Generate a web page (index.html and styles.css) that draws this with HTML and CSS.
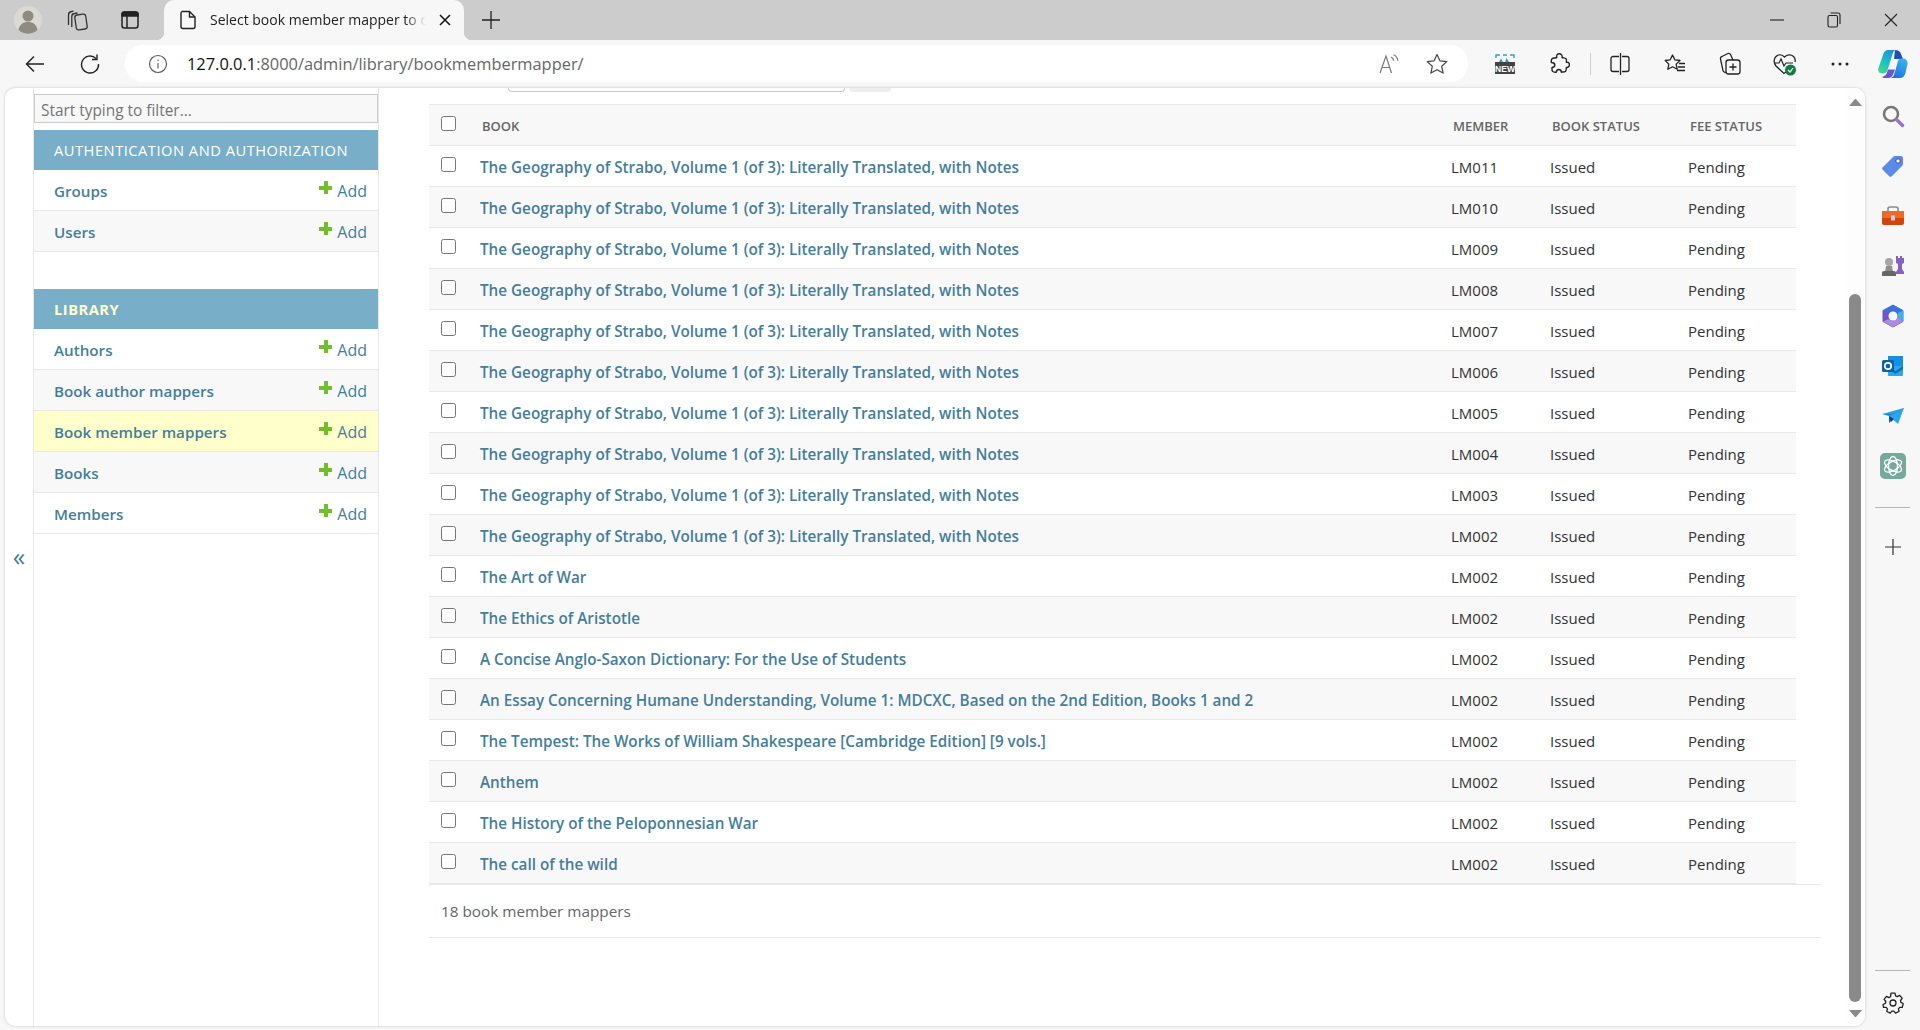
FILE: index.html
```html
<!DOCTYPE html>
<html lang="en">

<head>
    <meta charset="UTF-8">
    <title>Select book member mapper to change</title>
    <link rel="stylesheet" href="styles.css">
</head>

<body>
    <!-- tab strip -->
    <div class="tabstrip">
        <div class="strip-btn profile-btn">
            <svg width="30" height="30" viewBox="0 0 30 30"><circle cx="15" cy="15" r="14" fill="#dbd9d4"/><circle cx="15" cy="11" r="5.5" fill="#8e8b85"/><path d="M5.5 25c.8-5.500 4.500-8 9.500-8s8.700 2.500 9.500 8a14 14 0 0 1-19 0z" fill="#8e8b85"/></svg>
        </div>
        <div class="strip-btn workspaces-btn">
            <svg width="24" height="24" viewBox="0 0 24 24" fill="none" stroke="#333" stroke-width="1.3"><path d="M3.5 17V7a3.500 3.500 0 0 1 3-3.500l2-.4"/><path d="M6.800 19V8.500a3 3 0 0 1 2.700-3l3-.5"/><rect x="10.500" y="6.500" width="11" height="15" rx="2.500" transform="rotate(-8 16 14)"/></svg>
        </div>
        <div class="strip-btn layout-btn">
            <svg width="20" height="20" viewBox="0 0 20 20" fill="none" stroke="#222" stroke-width="1.5"><rect x="2" y="2" width="16" height="16" rx="2.5"/><path d="M2 4.500A2.500 2.500 0 0 1 4.500 2h11A2.500 2.500 0 0 1 18 4.500V6H2z" fill="#222"/><path d="M7 6v12"/></svg>
        </div>
        <div class="tab">
            <svg class="tab-icon" width="18" height="20" viewBox="0 0 18 20" fill="none" stroke="#222" stroke-width="1.4"><path d="M3 1.500h7.500L16 7v9.500a2 2 0 0 1-2 2H4a2 2 0 0 1-2-2v-13a2 2 0 0 1 1-2z"/><path d="M10.500 1.500V7H16"/></svg>
            <span class="tab-title">Select book member mapper to change</span>
            <svg class="tab-close" width="12" height="12" viewBox="0 0 12 12" stroke="#111" stroke-width="1.5"><path d="M1 1l10 10M11 1L1 11"/></svg>
        </div>
        <div class="new-tab">
            <svg width="18" height="18" viewBox="0 0 18 18" stroke="#222" stroke-width="1.3"><path d="M9 0v18M0 9h18"/></svg>
        </div>
        <div class="window-btns">
            <div class="window-btn"><svg width="14" height="14" viewBox="0 0 14 14" stroke="#222" stroke-width="1.1"><path d="M0 7h14"/></svg></div>
            <div class="window-btn"><svg width="14" height="16" viewBox="0 0 14 16" fill="none" stroke="#222" stroke-width="1.1"><rect x="1" y="3.500" width="9.500" height="11.500" rx="1.500"/><path d="M3.500 1H11a2 2 0 0 1 2 2v9"/></svg></div>
            <div class="window-btn"><svg width="14" height="14" viewBox="0 0 14 14" stroke="#222" stroke-width="1.1"><path d="M1 1l12 12M13 1L1 13"/></svg></div>
        </div>
    </div>

    <!-- address bar row -->
    <div class="toolbar">
        <div class="tool">
            <svg width="20" height="18" viewBox="0 0 20 18" fill="none" stroke="#222" stroke-width="1.4"><path d="M19 9H1.500M9 1.500L1.500 9 9 16.500"/></svg>
        </div>
        <div class="tool">
            <svg width="20" height="20" viewBox="0 0 20 20" fill="none" stroke="#222" stroke-width="1.4"><path d="M16 4.500A8.500 8.500 0 1 0 18.500 10"/><path d="M17 0.500v5h-5"/></svg>
        </div>
        <div class="address">
            <svg class="info-icon" width="20" height="20" viewBox="0 0 20 20" fill="none" stroke="#555" stroke-width="1.1"><circle cx="10" cy="10" r="8.500"/><path d="M10 9v5.500M10 5.500V7"/></svg>
            <span class="url"><span class="url-host">127.0.0.1</span>:8000/admin/library/bookmembermapper/</span>
            <svg class="read-icon" width="20" height="20" viewBox="0 0 20 20" fill="none" stroke="#777" stroke-width="1.2"><path d="M1 19L7 2l5.500 17M3 13.500h8"/><path d="M12 3c1.500.6 2.500 2 2.700 3.800M14.500 .8c2.500 1 4 3 4.300 6"/></svg>
            <svg class="star-icon" width="24" height="24" viewBox="0 0 24 24" fill="none" stroke="#444" stroke-width="1.2" stroke-linejoin="round"><path d="M12 2.500l2.900 6.300 6.900.8-5.100 4.700 1.400 6.800-6.100-3.400-6.100 3.400 1.400-6.800-5.100-4.700 6.900-.8z"/></svg>
        </div>
        <div class="tool tool-first">
            <svg width="20" height="20" viewBox="0 0 20 20"><path d="M1 4V1h4M8 1h4M15 1h4v3" stroke="#2aa5b5" stroke-width="1.4" fill="none"/><path d="M4 8l2-3.500L8 8zM10 8l1.500-4L14 8z" fill="#2aa5b5"/><rect y="8" width="20" height="12" fill="#444"/><text class="new-label" x="10" y="17.500">NEW</text></svg>
        </div>
        <div class="tool">
            <svg width="20" height="22" viewBox="0 0 20 22" fill="none" stroke="#222" stroke-width="1.4" stroke-linejoin="round"><path d="M6.800 4.500C6 2.300 7.500 .8 9.300 .8s3.300 1.500 2.700 3.700c1.500 .6 3 .3 4 1.300 .8 .9 .3 2.500 .4 3.500 2-.4 3 1 3 2.500s-1 3-3 2.600c-.2 1.300 .2 2.800-.8 3.800-1.200 1.100-3 .6-4.200 1-.2-1.600-1.200-2.700-2.600-2.700s-2.300 1.100-2.500 2.700c-1.300 0-2.800 .2-3.700-.8-.9-1-.6-2.700-.6-4 1.600-.1 2.800-1.100 2.800-2.500S3 9.500 1.300 9.500c0-1.300-.2-2.800 .7-3.700 1.200-1.100 3.300-.6 4.800-1.300z"/></svg>
        </div>
        <div class="tool-sep"></div>
        <div class="tool">
            <svg width="20" height="22" viewBox="0 0 20 22" fill="none" stroke="#222" stroke-width="1.3"><path d="M9 3.500H3a2 2 0 0 0-2 2v11a2 2 0 0 0 2 2h6M12 3.500h5a2 2 0 0 1 2 2v11a2 2 0 0 1-2 2h-5M10.500 0v22"/></svg>
        </div>
        <div class="tool">
            <svg width="22" height="22" viewBox="0 0 22 22" fill="none" stroke="#222" stroke-width="1.3" stroke-linejoin="round"><path d="M8.500 2l2.300 4.800 5.200.7-3.800 3.600 1 5.200-4.700-2.500-4.700 2.500 1-5.200L1.200 7.500l5-.7zM15 10.500h6M14 14h7M13 17.500h8"/></svg>
        </div>
        <div class="tool">
            <svg width="22" height="24" viewBox="0 0 22 24" fill="none" stroke="#222" stroke-width="1.3"><rect x="7" y="8" width="14" height="14" rx="2.5"/><path d="M14 11.500v7M10.500 15h7"/><path d="M7 20.500l-1.500-.3A2 2 0 0 1 4 18.700L1.500 7A2 2 0 0 1 3 4.500l6-3a2 2 0 0 1 2.500 1L14 8"/></svg>
        </div>
        <div class="tool">
            <svg width="24" height="24" viewBox="0 0 24 24" fill="none"><path d="M13 20l-2 1.500L3 14C.5 11 .5 7 3 4.500s6-2 8.500.5c2.500-2.500 6.500-3 9-.5 1.500 1.500 2 3.500 1.500 5.500" stroke="#222" stroke-width="1.3"/><path d="M1 11h5l2-4 3 7 2-3h7" stroke="#222" stroke-width="1.2"/><circle cx="17.500" cy="18" r="5.500" fill="#107c41"/><path d="M15 18l2 2 3-4" stroke="#fff" stroke-width="1.2"/></svg>
        </div>
        <div class="tool">
            <svg width="18" height="4" viewBox="0 0 18 4" fill="#222"><circle cx="2" cy="2" r="1.5"/><circle cx="9" cy="2" r="1.5"/><circle cx="16" cy="2" r="1.5"/></svg>
        </div>
        <div class="tool tool-copilot">
            <svg width="30" height="28" viewBox="0 0 30 28">
                <defs>
                    <linearGradient id="cpLeft" x1="0.7" y1="0" x2="0.2" y2="1"><stop offset="0" stop-color="#1f8fe0"/><stop offset="0.55" stop-color="#1ec3c0"/><stop offset="1" stop-color="#46d98a"/></linearGradient>
                    <linearGradient id="cpRight" x1="0.8" y1="0" x2="0.2" y2="1"><stop offset="0" stop-color="#38b4f0"/><stop offset="1" stop-color="#1d6fe0"/></linearGradient>
                </defs>
                <path d="M17 0c3 0 5 1 6 4l2 5H16z" fill="#1f4fb8"/>
                <path d="M10 0h8c-1.500 0-2.500 1-3 2.500L9.500 20c-.6 2-2.500 3.500-4.500 3.500H3.500C1 23.500-.5 21 .3 18.500L5.500 3.500C6.300 1.300 8 0 10 0z" fill="url(#cpLeft)"/>
                <path d="M6 28c-1.500 0-2-1-1-1.500 2-.5 3.500-2 4-4l1-3h7l-2 5c-.8 2-2.500 3.500-4.500 3.500z" fill="#6a55d8"/>
                <path d="M12 28c2 0 3.500-1.500 4.200-3.500L20 11c.5-1.500 1.500-2.500 3-2.500h2c3 0 5 2.500 4.500 5.500l-2 9c-.7 3-3 5-5.500 5z" fill="url(#cpRight)"/>
            </svg>
        </div>
    </div>

    <div class="window">
        <div class="page">
            <div class="nav-toggle">«</div>

            <div class="nav">
                <input class="nav-filter" type="text" placeholder="Start typing to filter...">

                <div class="app-caption">Authentication and Authorization</div>
                <div class="model-row"><a class="model-name">Groups</a><a class="addlink">Add</a></div>
                <div class="model-row alt"><a class="model-name">Users</a><a class="addlink">Add</a></div>

                <div class="app-caption current">Library</div>
                <div class="model-row"><a class="model-name">Authors</a><a class="addlink">Add</a></div>
                <div class="model-row alt"><a class="model-name">Book author mappers</a><a class="addlink">Add</a></div>
                <div class="model-row selected"><a class="model-name">Book member mappers</a><a class="addlink">Add</a></div>
                <div class="model-row alt"><a class="model-name">Books</a><a class="addlink">Add</a></div>
                <div class="model-row"><a class="model-name">Members</a><a class="addlink">Add</a></div>
            </div>

            <div class="content">
                <div class="search-bar">
                    <div class="search-input"></div>
                    <div class="search-btn"></div>
                </div>

                <table class="result-list">
                    <thead>
                        <tr>
                            <th class="col-check"><input type="checkbox"></th>
                            <th class="col-book">Book</th>
                            <th class="col-member">Member</th>
                            <th class="col-status">Book status</th>
                            <th class="col-fee">Fee status</th>
                        </tr>
                    </thead>
                    <tbody>
                        <tr><td><input type="checkbox"></td><td><a>The Geography of Strabo, Volume 1 (of 3): Literally Translated, with Notes</a></td><td>LM011</td><td>Issued</td><td>Pending</td></tr>
                        <tr><td><input type="checkbox"></td><td><a>The Geography of Strabo, Volume 1 (of 3): Literally Translated, with Notes</a></td><td>LM010</td><td>Issued</td><td>Pending</td></tr>
                        <tr><td><input type="checkbox"></td><td><a>The Geography of Strabo, Volume 1 (of 3): Literally Translated, with Notes</a></td><td>LM009</td><td>Issued</td><td>Pending</td></tr>
                        <tr><td><input type="checkbox"></td><td><a>The Geography of Strabo, Volume 1 (of 3): Literally Translated, with Notes</a></td><td>LM008</td><td>Issued</td><td>Pending</td></tr>
                        <tr><td><input type="checkbox"></td><td><a>The Geography of Strabo, Volume 1 (of 3): Literally Translated, with Notes</a></td><td>LM007</td><td>Issued</td><td>Pending</td></tr>
                        <tr><td><input type="checkbox"></td><td><a>The Geography of Strabo, Volume 1 (of 3): Literally Translated, with Notes</a></td><td>LM006</td><td>Issued</td><td>Pending</td></tr>
                        <tr><td><input type="checkbox"></td><td><a>The Geography of Strabo, Volume 1 (of 3): Literally Translated, with Notes</a></td><td>LM005</td><td>Issued</td><td>Pending</td></tr>
                        <tr><td><input type="checkbox"></td><td><a>The Geography of Strabo, Volume 1 (of 3): Literally Translated, with Notes</a></td><td>LM004</td><td>Issued</td><td>Pending</td></tr>
                        <tr><td><input type="checkbox"></td><td><a>The Geography of Strabo, Volume 1 (of 3): Literally Translated, with Notes</a></td><td>LM003</td><td>Issued</td><td>Pending</td></tr>
                        <tr><td><input type="checkbox"></td><td><a>The Geography of Strabo, Volume 1 (of 3): Literally Translated, with Notes</a></td><td>LM002</td><td>Issued</td><td>Pending</td></tr>
                        <tr><td><input type="checkbox"></td><td><a>The Art of War</a></td><td>LM002</td><td>Issued</td><td>Pending</td></tr>
                        <tr><td><input type="checkbox"></td><td><a>The Ethics of Aristotle</a></td><td>LM002</td><td>Issued</td><td>Pending</td></tr>
                        <tr><td><input type="checkbox"></td><td><a>A Concise Anglo-Saxon Dictionary: For the Use of Students</a></td><td>LM002</td><td>Issued</td><td>Pending</td></tr>
                        <tr><td><input type="checkbox"></td><td><a>An Essay Concerning Humane Understanding, Volume 1: MDCXC, Based on the 2nd Edition, Books 1 and 2</a></td><td>LM002</td><td>Issued</td><td>Pending</td></tr>
                        <tr><td><input type="checkbox"></td><td><a>The Tempest: The Works of William Shakespeare [Cambridge Edition] [9 vols.]</a></td><td>LM002</td><td>Issued</td><td>Pending</td></tr>
                        <tr><td><input type="checkbox"></td><td><a>Anthem</a></td><td>LM002</td><td>Issued</td><td>Pending</td></tr>
                        <tr><td><input type="checkbox"></td><td><a>The History of the Peloponnesian War</a></td><td>LM002</td><td>Issued</td><td>Pending</td></tr>
                        <tr><td><input type="checkbox"></td><td><a>The call of the wild</a></td><td>LM002</td><td>Issued</td><td>Pending</td></tr>
                    </tbody>
                </table>

                <p class="paginator">18 book member mappers</p>
            </div>

            <div class="scrollbar">
                <div class="scroll-arrow up"></div>
                <div class="scroll-track"><div class="scroll-thumb"></div></div>
                <div class="scroll-arrow down"></div>
            </div>
        </div>

        <!-- edge sidebar -->
        <div class="rail">
            <div class="rail-btn"><svg width="24" height="24" viewBox="0 0 24 24" fill="none"><circle cx="10" cy="10" r="7" stroke="#777" stroke-width="2.6"/><path d="M15.500 15.500l6 6" stroke="#9b6fd0" stroke-width="3.4" stroke-linecap="round"/></svg></div>
            <div class="rail-btn"><svg width="22" height="22" viewBox="0 0 22 22"><path d="M13 1h6a2 2 0 0 1 2 2v6a3 3 0 0 1-1 2L10 21a2 2 0 0 1-3 0L1 15a2 2 0 0 1 0-3L11 2a3 3 0 0 1 2-1z" fill="#5b8be6"/><circle cx="16" cy="6" r="2.2" fill="#fff" stroke="#4b3fa8" stroke-width="1"/></svg></div>
            <div class="rail-btn"><svg width="24" height="20" viewBox="0 0 24 20"><path d="M7 6V3a2 2 0 0 1 2-2h6a2 2 0 0 1 2 2v3" fill="none" stroke="#8a8a8a" stroke-width="1.6"/><rect x="1" y="5" width="22" height="7" fill="#ef6a2a"/><path d="M1 12h22v5a2 2 0 0 1-2 2H3a2 2 0 0 1-2-2z" fill="#d2430f"/><rect x="10" y="9.500" width="4" height="5" fill="#ccc"/></svg></div>
            <div class="rail-btn"><svg width="24" height="24" viewBox="0 0 24 24"><path d="M15 2h2v2h2V2h2v2h2V2v7l-2 1v5l2 3v2h-8v-2l2-3v-5l-2-1z" fill="#8661c5"/><circle cx="8" cy="8" r="4" fill="#a6a6a6"/><path d="M5 12h6l1 6H4z" fill="#8f8f8f"/><path d="M1 19c0-2 2-2 3-2h8c1 0 3 0 3 2v3H1z" fill="#666"/></svg></div>
            <div class="rail-btn"><svg width="22" height="24" viewBox="0 0 22 24"><path d="M11 1l10 5.500v11L11 23 1 17.500v-11z" fill="#3f6fd8" stroke="#3f6fd8" stroke-width="1" stroke-linejoin="round"/><path d="M1 17.500L11 23l10-5.500L16 13l-5 4-5-2z" fill="#b38ae0"/><path d="M1 6.500L6 9v6l-5 2.500z" fill="#7b4fc9"/><path d="M16 9l5-2.500v11L16 13z" fill="#38b6e8"/><circle cx="11" cy="12" r="4.500" fill="#f7f7f7"/></svg></div>
            <div class="rail-btn"><svg width="22" height="22" viewBox="0 0 22 22"><rect x="6" y="1" width="15" height="10" fill="#1490df"/><path d="M6 11h15v9a1 1 0 0 1-1 1H7a1 1 0 0 1-1-1z" fill="#28a8ea"/><path d="M6 11l7.500 5 7.500-5v3l-7.500 5L6 14z" fill="#0f6cbd"/><rect y="5" width="12" height="12" rx="1.5" fill="#0a5fb4"/><circle cx="6" cy="11" r="3.200" fill="none" stroke="#fff" stroke-width="1.7"/></svg></div>
            <div class="rail-btn"><svg width="22" height="18" viewBox="0 0 22 18"><path d="M0 7L22 1 12 7z" fill="#2b9fe8"/><path d="M22 1L7 9v7z" fill="#1268c9"/><path d="M22 1l-6 16-9-8z" fill="#29a8f0"/><path d="M0 7l7 2 5-2z" fill="#1e88d8"/><path d="M7 9l2 6 3-3z" fill="#0c3f8f"/></svg></div>
            <div class="rail-btn"><svg width="26" height="26" viewBox="0 0 26 26" fill="none"><rect width="26" height="26" rx="5" fill="#75a99b"/><g stroke="#fff" stroke-width="1.3"><ellipse cx="13" cy="13" rx="4.500" ry="9.500"/><ellipse cx="13" cy="13" rx="4.500" ry="9.500" transform="rotate(60 13 13)"/><ellipse cx="13" cy="13" rx="4.500" ry="9.500" transform="rotate(120 13 13)"/></g></svg></div>
            <div class="rail-sep"></div>
            <div class="rail-btn"><svg width="16" height="16" viewBox="0 0 16 16" stroke="#333" stroke-width="1.2"><path d="M8 0v16M0 8h16"/></svg></div>
            <div class="rail-spacer"></div>
            <div class="rail-sep"></div>
            <div class="rail-gear"><svg width="22" height="22" viewBox="0 0 22 22" fill="none" stroke="#222" stroke-width="1.3" stroke-linejoin="round"><circle cx="11" cy="11" r="3"/><path d="M9 1.200h4l.6 2.600 1.700.8 2.400-1.200 2.500 3-1.700 2.100.4 1.900 2.300 1.100-.9 3.800-2.600.1-1.200 1.500.5 2.600-3.500 1.600-1.600-2h-2l-1.700 2-3.400-1.600.6-2.600-1.200-1.500-2.700-.1L1 12.500l2.400-1.100.4-1.900L2.100 7.400l2.400-3 2.500 1.200 1.500-.8z"/></svg></div>
        </div>
    </div>
</body>

</html>
```

FILE: styles.css
```css
* {
    box-sizing: border-box;
}

html,
body {
    height: 100%;
}

body {
    margin: 0;
    overflow: hidden;
    display: flex;
    flex-direction: column;
    font-family: "Open Sans", "Noto Sans", sans-serif;
    background-color: #f7f7f7;
    color: #333;
}

svg {
    display: block;
}

/* browser chrome */
.tabstrip {
    height: 40px;
    flex: none;
    display: flex;
    align-items: center;
    background-color: #cccccc;
}

.strip-btn {
    display: flex;
    align-items: center;
    justify-content: center;
    flex: none;
}

.profile-btn {
    width: 30px;
    margin-left: 13px;
}

.workspaces-btn {
    width: 24px;
    margin-left: 22px;
}

.layout-btn {
    width: 20px;
    margin-left: 31px;
}

.tab {
    position: relative;
    width: 300px;
    height: 40px;
    margin-left: 24px;
    padding-left: 15px;
    display: flex;
    align-items: center;
    background-color: #f7f7f7;
    border-radius: 10px 10px 0 0;
    flex: none;
}

/* the little curves where the tab meets the toolbar */
.tab::before,
.tab::after {
    content: "";
    position: absolute;
    bottom: 0;
    width: 8px;
    height: 8px;
}

.tab::before {
    left: -8px;
    background: radial-gradient(circle at 0 0, transparent 8px, #f7f7f7 8.5px);
}

.tab::after {
    right: -8px;
    background: radial-gradient(circle at 100% 0, transparent 8px, #f7f7f7 8.5px);
}

.tab-icon {
    flex: none;
}

.tab-title {
    margin-left: 13px;
    padding-bottom: 2px;
    width: 216px;
    font-size: 14px;
    white-space: nowrap;
    overflow: hidden;
    color: #222;
    -webkit-mask-image: linear-gradient(to right, #000 195px, transparent 216px);
    mask-image: linear-gradient(to right, #000 195px, transparent 216px);
}

.tab-close {
    margin-left: 13px;
    flex: none;
}

.new-tab {
    margin-left: 18px;
    flex: none;
}

.window-btns {
    margin-left: auto;
    padding-right: 1px;
    display: flex;
}

.window-btn {
    width: 57px;
    height: 40px;
    display: flex;
    align-items: center;
    justify-content: center;
}

.toolbar {
    height: 48px;
    flex: none;
    display: flex;
    align-items: flex-start;
    padding-left: 7px;
    background-color: #f7f7f7;
}

.tool {
    width: 55px;
    height: 37px;
    margin-top: 5px;
    display: flex;
    align-items: center;
    justify-content: center;
    flex: none;
}

.tool-first {
    margin-left: 9px;
}

.tool-sep {
    width: 1px;
    height: 22px;
    margin-top: 13px;
    margin-left: 3px;
    margin-right: 1px;
    background-color: #cfcfcf;
    flex: none;
}

.tool-copilot {
    width: 51px;
}

.address {
    width: 1343px;
    height: 37px;
    margin-top: 5px;
    margin-left: 8px;
    display: flex;
    align-items: center;
    background-color: #fff;
    border-radius: 18px;
    flex: none;
}

.info-icon {
    margin-left: 23px;
}

.url {
    margin-left: 19px;
    font-size: 16.4px;
    color: #666;
}

.url-host {
    color: #111;
}

.read-icon {
    margin-left: auto;
}

.star-icon {
    margin-left: 26px;
    margin-right: 19px;
}

.new-label {
    font-family: "Liberation Sans", sans-serif;
    font-size: 8.5px;
    font-weight: 700;
    fill: #fff;
    text-anchor: middle;
}

/* page */
.window {
    flex: 1;
    min-height: 0;
    display: flex;
}

.page {
    width: 1860px;
    height: 938px;
    margin-left: 5px;
    display: flex;
    overflow: hidden;
    background-color: #fff;
    border-radius: 10px;
    box-shadow: 0 0 3px rgba(0, 0, 0, 0.2);
    flex: none;
}

.nav-toggle {
    width: 29px;
    padding-top: 452px;
    border-right: 1px solid #e8e8e8;
    color: #447e9b;
    font-size: 25px;
    line-height: 32px;
    text-align: center;
    flex: none;
}

.nav {
    width: 345px;
    border-right: 1px solid #e8e8e8;
    flex: none;
}

.nav-filter {
    display: block;
    width: 344px;
    height: 29px;
    margin: 6px 0 7px;
    padding: 3px 6px 0;
    border: 1px solid #ccc;
    background-color: #f8f8f8;
    font-family: inherit;
    font-size: 15.4px;
}

.nav-filter::placeholder {
    color: #757575;
    opacity: 1;
}

.app-caption {
    height: 40px;
    padding-left: 20px;
    line-height: 41px;
    background-color: #79aec8;
    color: #fff;
    font-size: 14.7px;
    letter-spacing: 0.5px;
    text-transform: uppercase;
}

.app-caption.current {
    margin-top: 37px;
    color: #ffc;
    font-weight: 700;
}

.model-row {
    height: 41px;
    padding: 1px 11px 0 20px;
    display: flex;
    align-items: center;
    justify-content: space-between;
    border-bottom: 1px solid #e8e8e8;
    font-size: 15.2px;
    color: #447e9b;
}

.model-row.alt {
    background-color: #f8f8f8;
}

.model-row.selected {
    background-color: #ffc;
}

.model-name {
    font-weight: 600;
}

.addlink {
    position: relative;
    padding-left: 18px;
    font-size: 16px;
}

/* green plus in front of Add */
.addlink::before,
.addlink::after {
    content: "";
    position: absolute;
    background-color: #70bf2b;
}

.addlink::before {
    left: 0;
    top: 6px;
    width: 13px;
    height: 4px;
}

.addlink::after {
    left: 4.5px;
    top: 1.5px;
    width: 4px;
    height: 13px;
}

.content {
    width: 1443px;
    padding-left: 50px;
    flex: none;
}

.search-bar {
    height: 16px;
    display: flex;
    gap: 4px;
    padding-left: 79px;
}

.search-input {
    width: 337px;
    height: 4px;
    border: 1px solid #ccc;
    border-top: none;
    border-radius: 0 0 4px 4px;
}

.search-btn {
    width: 42px;
    height: 4px;
    background-color: #eee;
    border-radius: 0 0 4px 4px;
}

.result-list {
    width: 1367px;
    border-collapse: collapse;
    table-layout: fixed;
    font-size: 15px;
}

.result-list th {
    height: 41px;
    padding: 1px 0 0 12px;
    border-top: 1px solid #e8e8e8;
    border-bottom: 1px solid #e8e8e8;
    background-color: #f8f8f8;
    color: #666;
    font-size: 13px;
    font-weight: 600;
    text-align: left;
    text-transform: uppercase;
}

.result-list td {
    height: 41px;
    padding: 1px 0 0 10px;
    border-bottom: 1px solid #e8e8e8;
    color: #333;
}

.result-list tbody tr:nth-child(even) td {
    background-color: #f8f8f8;
}

.result-list a {
    color: #447e9b;
    font-size: 15.25px;
    font-weight: 600;
}

.result-list th:first-child,
.result-list td:first-child {
    padding: 0 0 0 12px;
}

.result-list input {
    display: block;
    width: 15px;
    height: 15px;
    margin: 0 0 3px;
}

.col-check {
    width: 41px;
}

.col-book {
    width: 971px;
}

.col-member {
    width: 99px;
}

.col-status {
    width: 138px;
}

.paginator {
    width: 1392px;
    height: 54px;
    margin: 0;
    padding-left: 12px;
    line-height: 52px;
    border-top: 1px solid #e8e8e8;
    border-bottom: 1px solid #e8e8e8;
    color: #666;
    font-size: 15.3px;
}

.scrollbar {
    width: 19px;
    padding: 11px 3px 9px 3px;
    margin-left: auto;
    display: flex;
    flex-direction: column;
    background-color: #fdfdfd;
    flex: none;
}

.scroll-arrow {
    height: 6px;
    flex: none;
    border-left: 6.5px solid transparent;
    border-right: 6.5px solid transparent;
}

.scroll-arrow.up {
    border-bottom: 7px solid #8a8a8a;
}

.scroll-arrow.down {
    border-top: 7px solid #8a8a8a;
}

.scroll-track {
    flex: 1;
    padding: 188px 0 8px;
}

.scroll-thumb {
    height: 100%;
    width: 12px;
    background-color: #8a8a8a;
    border-radius: 6px;
}

/* edge sidebar */
.rail {
    flex: 1;
    height: 942px;
    display: flex;
    flex-direction: column;
    align-items: center;
    padding-top: 2.5px;
}

.rail-btn {
    height: 50px;
    width: 40px;
    display: flex;
    align-items: center;
    justify-content: center;
    flex: none;
}

.rail-sep {
    width: 35px;
    height: 1px;
    margin: 16px 0 14px;
    background-color: #b5b5b5;
    flex: none;
}

.rail-spacer {
    flex: 1;
}

.rail-gear {
    height: 40px;
    margin-top: -2px;
    margin-bottom: 7px;
    display: flex;
    align-items: center;
    flex: none;
}
```
